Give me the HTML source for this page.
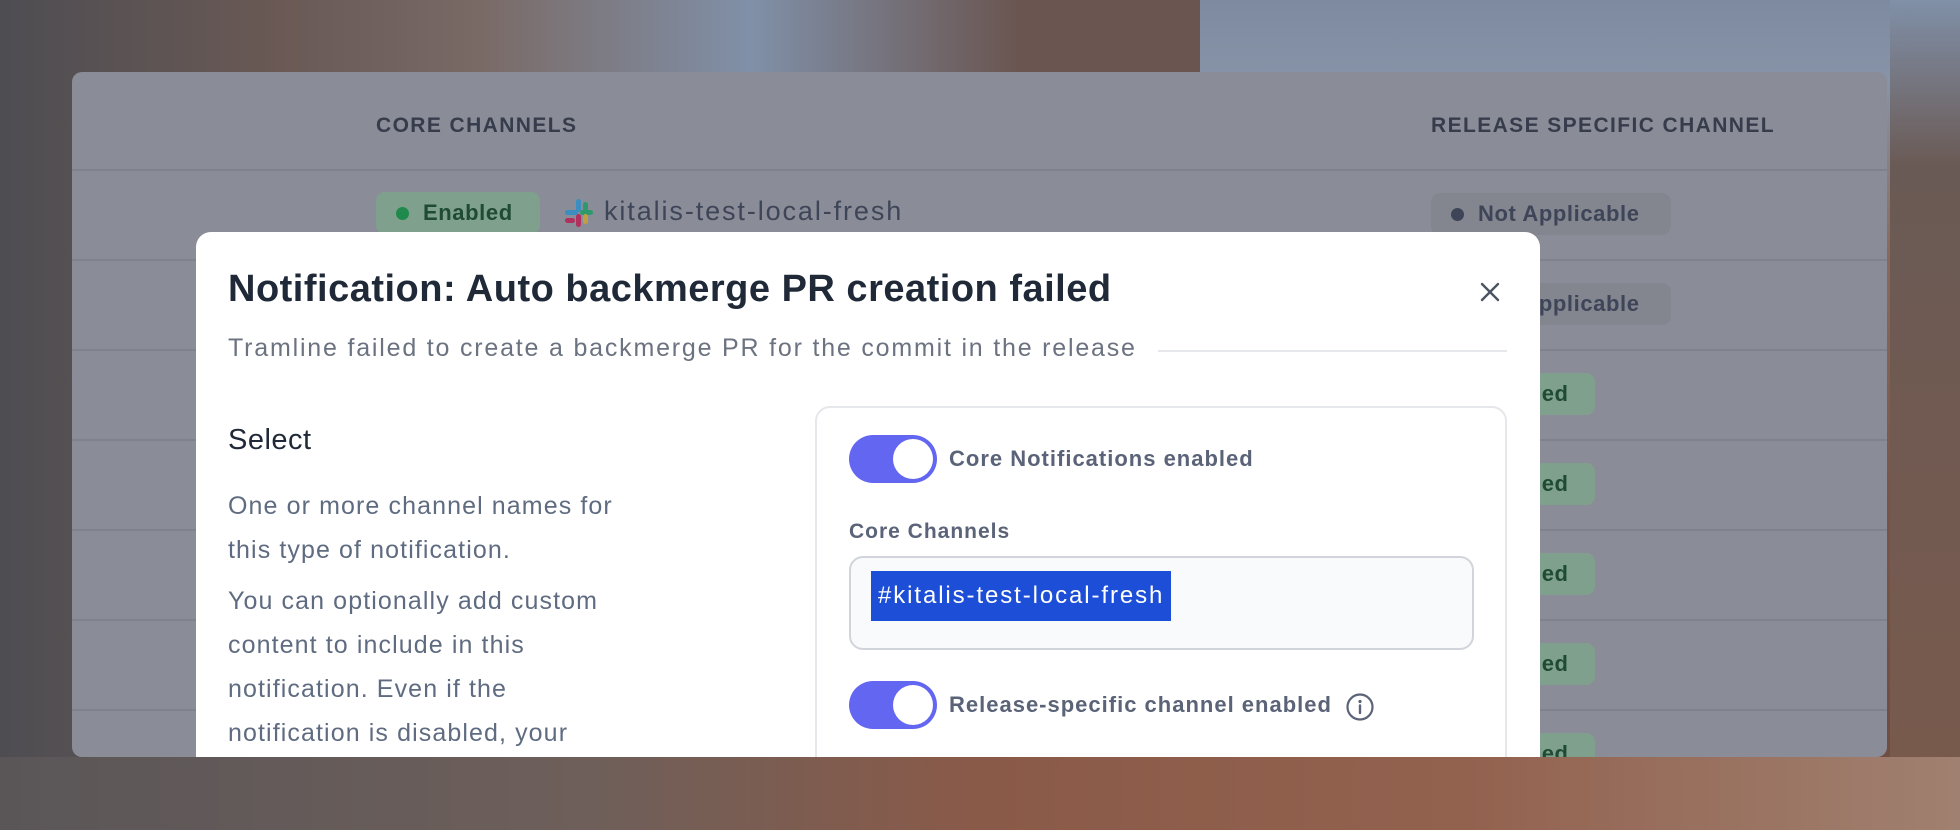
<!DOCTYPE html>
<html><head><meta charset="utf-8"><style>
*{margin:0;padding:0;box-sizing:border-box}
body{width:1960px;height:830px;overflow:hidden;position:relative;font-family:"Liberation Sans",sans-serif;
background:linear-gradient(180deg,#7d8aa0 0%,#8794a8 10%,#8b6a5c 30%,#7a5547 60%,#6e4b40 100%)}
.bg1{position:absolute;left:0;top:0;width:300px;height:830px;background:linear-gradient(90deg,#4e4d52,#6c5a55)}
.bg4{position:absolute;left:300px;top:0;width:900px;height:72px;background:linear-gradient(90deg,#6a5a58,#7a6a66 20%,#8090a8 50%,#6a5550 80%)}
.bg2{position:absolute;left:1890px;top:0;width:70px;height:830px;background:linear-gradient(180deg,#8090a8,#6a5a55 20%,#7a5a4c)}
.bg3{position:absolute;left:0;top:757px;width:1960px;height:73px;background:linear-gradient(90deg,#5a5658 0%,#6e5f5a 30%,#8a5a48 50%,#93624f 75%,#a08070 100%)}
.panel{position:absolute;left:72px;top:72px;width:1815px;height:685px;background:#8a8d97;border-radius:10px;overflow:hidden}
.hdr{position:absolute;top:42px;font-weight:700;font-size:21px;letter-spacing:1.4px;color:#363c4c}
.line{position:absolute;left:0;width:1815px;height:2px;background:#7f828c}
.badge{position:absolute;height:42px;border-radius:9px;font-size:22px;display:flex;align-items:center;padding-left:20px;gap:14px;letter-spacing:.6px}
.gb{background:#80a08e;color:#1f4a33;font-weight:700;width:164px;padding-left:104px}
.dot{width:13px;height:13px;border-radius:50%}
.modal{position:absolute;left:196px;top:232px;width:1344px;height:525px;background:#fff;border-radius:15px 15px 0 0;overflow:hidden}
.t{position:absolute;left:32px;top:36px;font-size:38px;font-weight:700;color:#1f2937;letter-spacing:.5px}
.sub{position:absolute;left:32px;top:102px;font-size:25px;color:#6b7280;letter-spacing:1.8px}
.sl{position:absolute;left:962px;top:118px;width:349px;height:2px;background:#e5e7eb}
.sel{position:absolute;left:32px;top:192px;font-size:29px;color:#1f2937;letter-spacing:.5px}
.body{position:absolute;left:32px;top:252px;width:520px;font-size:25px;color:#5f6b80;line-height:44px;letter-spacing:1.1px}
.card{position:absolute;left:619px;top:174px;width:692px;height:400px;border:2px solid #e5e7eb;border-radius:15px}
.tog{position:absolute;left:32px;width:88px;height:48px;border-radius:24px;background:#6366f1}
.tog::after{content:"";position:absolute;right:4px;top:4px;width:40px;height:40px;border-radius:50%;background:#fff}
.lab{position:absolute;left:132px;font-size:22px;font-weight:700;color:#5a6378;letter-spacing:1px}
.inp{position:absolute;left:32px;top:148px;width:625px;height:94px;background:#f9fafb;border:2px solid #d1d5db;border-radius:14px}
.hl{position:absolute;left:20px;top:13px;height:50px;padding:0 7px;background:#1d4ed8;color:#fff;font-size:24px;line-height:50px;letter-spacing:1.9px}
</style></head><body>
<div class="bg1"></div><div class="bg4"></div><div class="bg2"></div><div class="bg3"></div>
<div class="panel">
<div class="hdr" style="left:304px">CORE CHANNELS</div>
<div class="hdr" style="left:1359px">RELEASE SPECIFIC CHANNEL</div>
<div class="line" style="top:97px"></div><div class="line" style="top:187px"></div><div class="line" style="top:277px"></div><div class="line" style="top:367px"></div><div class="line" style="top:457px"></div><div class="line" style="top:547px"></div><div class="line" style="top:637px"></div>
<div class="badge" style="left:304px;top:120px;width:164px;background:#80a08e;color:#1f4a33;font-weight:700"><span class="dot" style="background:#1f8a4c"></span>Enabled</div>
<svg style="position:absolute;left:492px;top:126px" width="30" height="30" viewBox="0 0 30 30"><rect x="12" y="1" width="5" height="13" rx="2.5" fill="#3b8ec0"/><rect x="1" y="12" width="13" height="5" rx="2.5" fill="#3b8ec0"/><rect x="16" y="12" width="13" height="5" rx="2.5" fill="#2e9a6c"/><rect x="19" y="4" width="5" height="10" rx="2.5" fill="#2e9a6c"/><rect x="12" y="16" width="5" height="13" rx="2.5" fill="#b03060"/><rect x="1" y="20" width="10" height="5" rx="2.5" fill="#b03060"/><rect x="19" y="16" width="5" height="10" rx="2.5" fill="#c0a040"/></svg>
<div style="position:absolute;left:532px;top:124px;font-size:27px;color:#3e4558;letter-spacing:1.9px">kitalis-test-local-fresh</div>
<div class="badge" style="left:1359px;top:121px;width:240px;background:#83868f;color:#3e4558;font-weight:700"><span class="dot" style="background:#3e4558"></span>Not Applicable</div>
<div class="badge" style="left:1359px;top:211px;width:240px;background:#83868f;color:#3e4558;font-weight:700;padding-left:47px">Not Applicable</div>
<div class="badge gb" style="left:1359px;top:301px">led</div>
<div class="badge gb" style="left:1359px;top:391px">led</div>
<div class="badge gb" style="left:1359px;top:481px">led</div>
<div class="badge gb" style="left:1359px;top:571px">led</div>
<div class="badge gb" style="left:1359px;top:661px">led</div>
</div>
<div class="modal">
<div class="t">Notification: Auto backmerge PR creation failed</div>
<svg style="position:absolute;left:1283px;top:49px" width="22" height="22" viewBox="0 0 22 22"><path d="M3 3L19 19M19 3L3 19" stroke="#4b5563" stroke-width="2.4" stroke-linecap="round"/></svg>
<div class="sub">Tramline failed to create a backmerge PR for the commit in the release</div>
<div class="sl"></div>
<div class="sel">Select</div>
<div class="body">One or more channel names for<br>this type of notification.<div style="height:7px"></div>You can optionally add custom<br>content to include in this<br>notification. Even if the<br>notification is disabled, your</div>
<div class="card">
<div class="tog" style="top:27px"></div><div class="lab" style="top:38px">Core Notifications enabled</div>
<div class="lab" style="left:32px;top:112px;font-size:21px">Core Channels</div>
<div class="inp"><div class="hl">#kitalis-test-local-fresh</div></div>
<div class="tog" style="top:273px"></div><div class="lab" style="top:284px">Release-specific channel enabled</div>
<svg style="position:absolute;left:528px;top:284px" width="30" height="30" viewBox="0 0 30 30"><circle cx="15" cy="15" r="12.5" fill="none" stroke="#5a6378" stroke-width="2.2"/><circle cx="15" cy="9.5" r="1.6" fill="#5a6378"/><path d="M15 13.5V21" stroke="#5a6378" stroke-width="2.4" stroke-linecap="round"/></svg>
</div>
</div>
</body></html>
